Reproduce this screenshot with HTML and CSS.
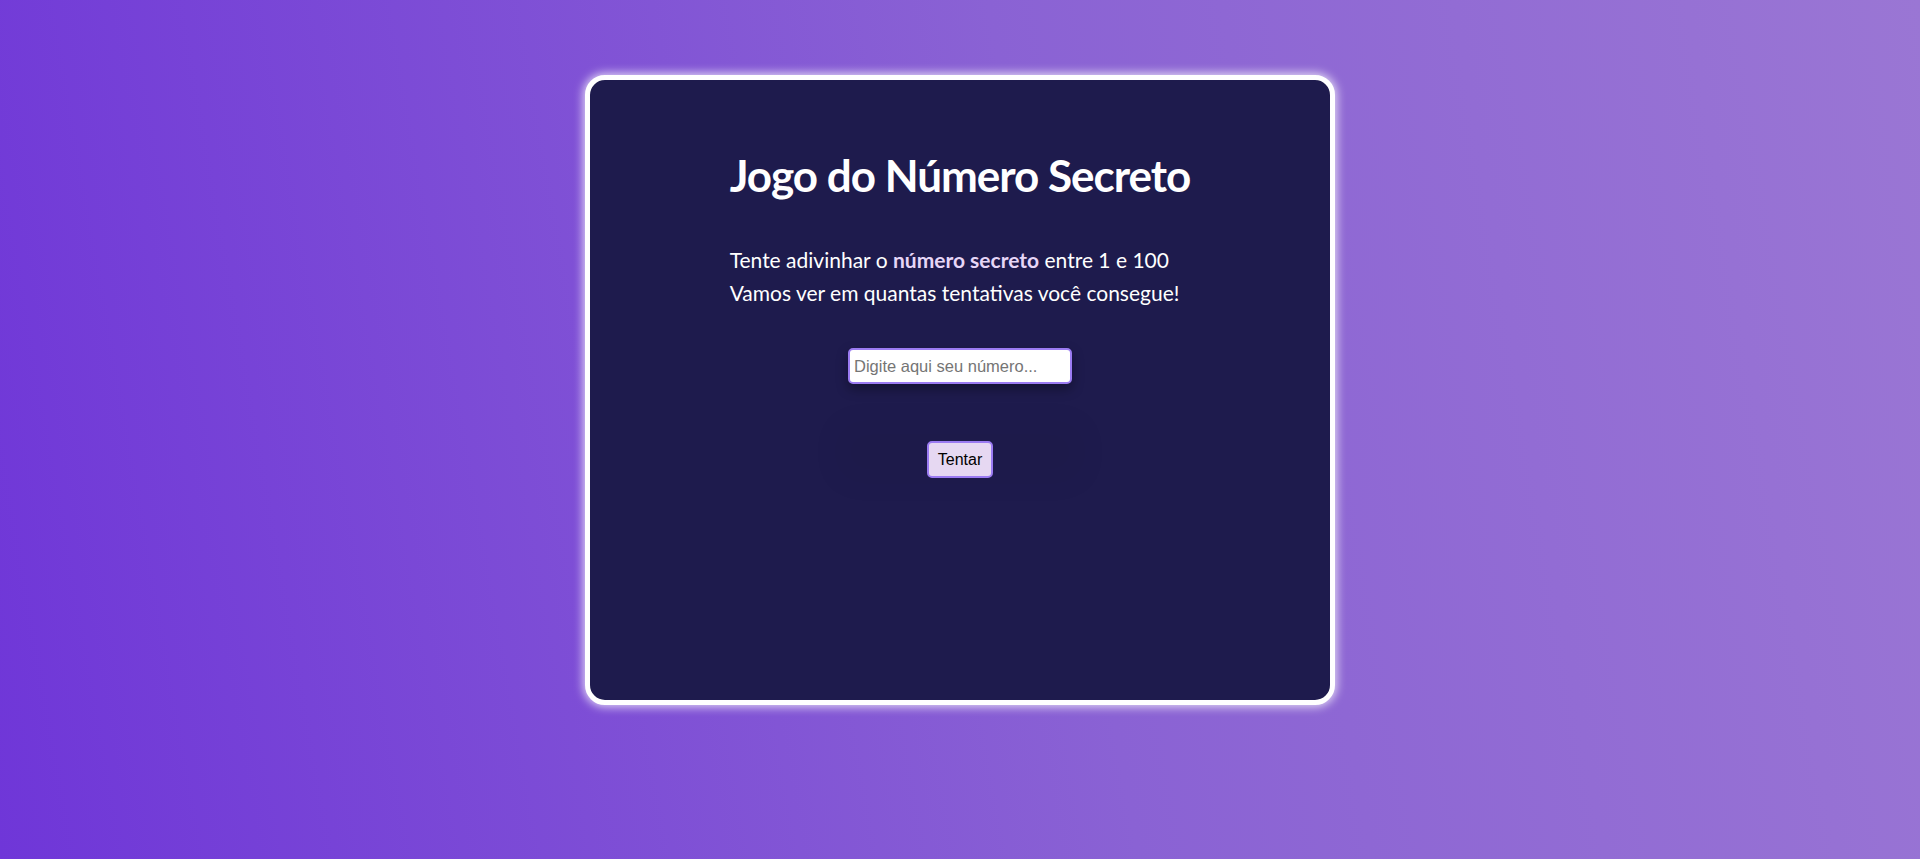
FILE: index.html
```html
<!DOCTYPE html>
<html lang="pt-BR">
<head>
<meta charset="utf-8">
<title>Jogo do Número Secreto</title>
<link rel="stylesheet" href="styles.css">
</head>
<body>
  <main class="card">
    <div class="intro">
      <h1 class="title">Jogo do Número Secreto</h1>
      <p class="text">Tente adivinhar o <strong class="highlight">número secreto</strong> entre 1 e 100</p>
      <p class="text">Vamos ver em quantas tentativas você consegue!</p>
    </div>
    <div class="controls">
      <input class="guess" type="number" placeholder="Digite aqui seu número...">
      <button class="try" type="button">Tentar</button>
    </div>
  </main>
</body>
</html>
```

FILE: styles.css
```css
html, body {
  margin: 0;
  padding: 0;
}

body {
  min-height: 100vh;
  box-sizing: border-box;
  background: linear-gradient(80deg, #6f36d8 0%, #8a62d4 55%, #9a76d4 100%);
  display: flex;
  justify-content: center;
  align-items: flex-start;
  padding-top: 75px;
  font-family: Lato, "Open Sans", sans-serif;
}

.card {
  box-sizing: border-box;
  width: 750px;
  height: 630px;
  background: #1e1b4d;
  border: 5px solid #ffffff;
  border-radius: 20px;
  box-shadow: 0 0 10px 2px rgba(255, 255, 255, 0.75);
  display: flex;
  flex-direction: column;
  align-items: center;
  padding-top: 67px;
}

.intro {
  width: fit-content;
  color: #ffffff;
}

.title {
  margin: 0 0 40px;
  font-size: 44px;
  line-height: 56px;
  font-weight: 700;
  letter-spacing: -1px;
  color: #ffffff;
}

.text {
  margin: 0;
  font-size: 21px;
  line-height: 33px;
  color: #ffffff;
}

.highlight {
  color: #e6d6f7;
  font-weight: 700;
}

.controls {
  display: flex;
  flex-direction: column;
  align-items: center;
  margin-top: 39px;
  gap: 57px;
}

.guess {
  box-sizing: border-box;
  width: 224px;
  height: 36px;
  border: 2px solid #9b7bf2;
  border-radius: 5px;
  padding: 0 4px;
  font-family: "Liberation Sans", Arial, sans-serif;
  font-size: 16.5px;
  background: #ffffff;
  box-shadow: 0 5px 12px rgba(0, 0, 0, 0.35), 0 86px 32px 12px rgba(0, 0, 0, 0.035);
  outline: none;
}

.guess::placeholder {
  color: #757575;
}

.guess::-webkit-outer-spin-button,
.guess::-webkit-inner-spin-button {
  -webkit-appearance: none;
  margin: 0;
}

.try {
  box-sizing: border-box;
  width: 66px;
  height: 37px;
  border: 2px solid #9b7bf2;
  border-radius: 5px;
  background: #e6d8f2;
  color: #000000;
  font-family: "Liberation Sans", Arial, sans-serif;
  font-size: 16px;
  padding: 0;
}
```
